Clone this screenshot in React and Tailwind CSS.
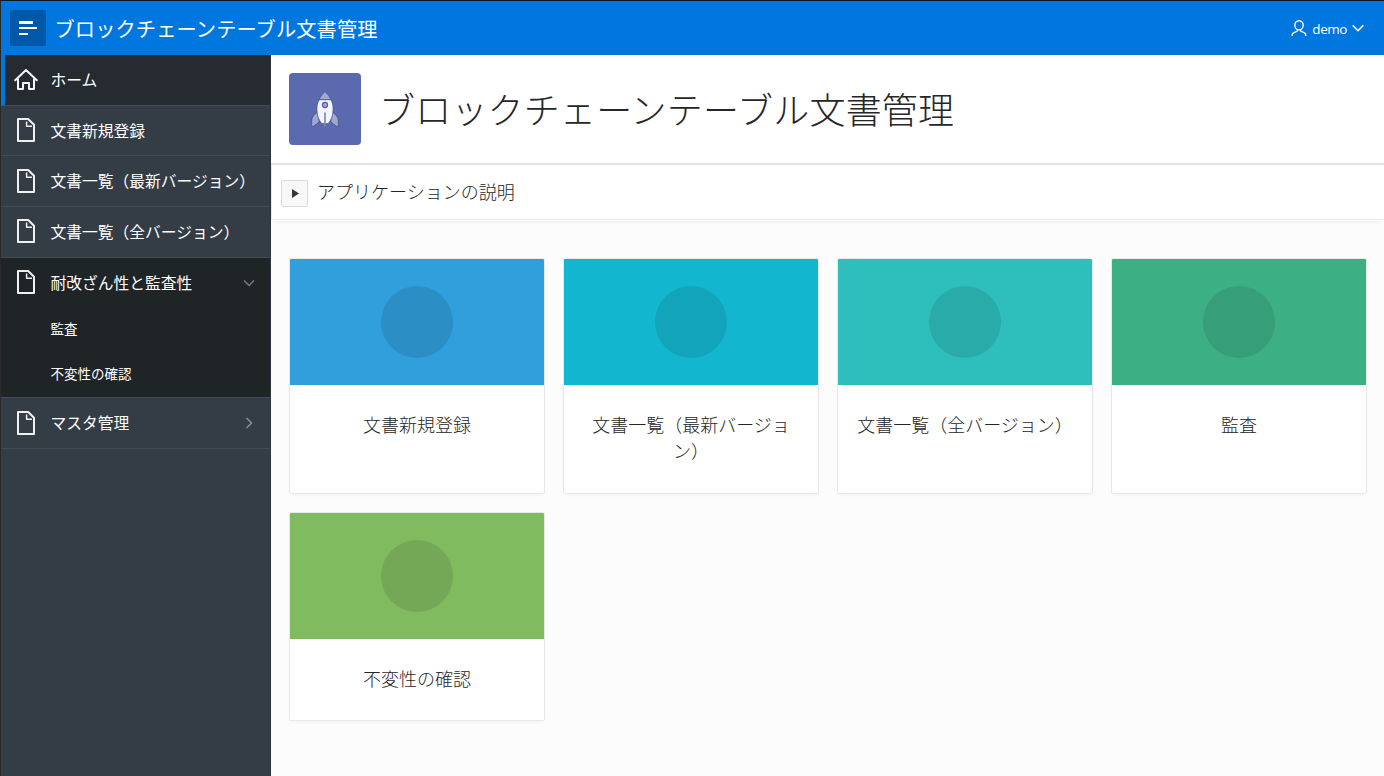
const FONT = 'font-["Open_Sans","Noto_Sans_CJK_JP",sans-serif]';

function HomeIcon() {
  return (
    <svg className="block h-6 w-6 shrink-0" viewBox="0 0 24 24" fill="none" stroke="#f4f5f5" strokeWidth="2" strokeLinejoin="round" strokeLinecap="round">
      <path d="M1.200 12.300 12 2l10.800 10.300M4 11.300V21h5v-6h6v6h5v-9.700" />
    </svg>
  );
}

function FileIcon({ className = "" }) {
  return (
    <svg className={`block h-6 w-6 shrink-0 ${className}`} viewBox="0 0 24 24" fill="none" stroke="#f0f1f1" strokeWidth="2" strokeLinejoin="round">
      <path d="M4 1h10.200L20 6.800V23H4z" />
      <path d="M12.600 3.600v4.700h5.400" strokeWidth="1.500" />
    </svg>
  );
}

function Chevron({ className, d, stroke, width = 1.5 }) {
  return (
    <svg className={className} viewBox="0 0 12 12" fill="none" stroke={stroke} strokeWidth={width}>
      <path d={d} />
    </svg>
  );
}

function Rocket() {
  return (
    <svg className="block h-9 w-7" viewBox="0 0 28 36" stroke="#434f91" strokeWidth="0.8" strokeLinejoin="round">
      <path d="M7 20.500C3 23.500.700 26.500.700 30v5.300h1.800L8.200 31zM21 20.500c4 3 6.300 6 6.300 9.500v5.300h-1.800L19.800 31z" fill="#a1a7d0" />
      <path d="M14 .6c-3 2.700-4.700 5-5.800 8.100h11.600C18.700 5.600 17 3.300 14 .6z" fill="#a1a7d0" />
      <path d="M8.200 8.700C6.300 12 5.900 14 5.900 18.500c0 6.500 2 11 5.100 14.200h6c3.100-3.200 5.100-7.700 5.100-14.200 0-4.500-.4-6.500-2.300-9.800z" fill="#f4f5fb" />
      <circle cx="14" cy="14" r="2.600" fill="#a1a7d0" stroke="#4f5b9f" strokeWidth="1.100" />
      <path d="M14 21.500v14" stroke="#7e86bb" strokeWidth="1.700" />
    </svg>
  );
}

function NavItem({ icon, label, height, active, open, arrow }) {
  const tone = active ? "bg-[#252b31]" : open ? "bg-[#1f2427]" : "";
  return (
    <a className={`flex ${height} items-center ${open ? "" : "border-b border-[#434c54]"} ${tone} ${active ? "border-l-4 border-l-[#0076df] pl-[9px]" : "pl-[13px]"} pr-[15px]`}>
      {icon}
      <span className="ml-[12.500px] flex-1 whitespace-nowrap text-[15.75px] leading-5 text-white">{label}</span>
      {arrow === "down" && <Chevron className="h-3 w-3" d="M1 3.500 6 8.500l5-5" stroke="#777b7d" />}
      {arrow === "right" && <Chevron className="h-3 w-3" d="M3.500 1l5 5-5 5" stroke="#838a90" width={1.700} />}
    </a>
  );
}

function Card({ title, color, circle, height }) {
  return (
    <div className={`${height} overflow-hidden rounded-[2px] border border-[#e9e9e9] bg-white shadow-[0_2px_4px_-2px_rgba(0,0,0,0.08)]`}>
      <div className={`flex h-[126px] items-center justify-center ${color}`}>
        <div className={`h-[72px] w-[72px] rounded-full ${circle}`} />
      </div>
      <div className="px-[18px] pt-[27px] text-center text-[18px] font-light leading-[26px] text-[#262626]">{title}</div>
    </div>
  );
}

export default function App() {
  return (
    <div className={`flex h-[776px] w-[1384px] flex-col overflow-hidden border-l border-t border-l-[#292929] border-t-[#10161d] bg-[#fcfcfc] ${FONT}`}>
      <header className="flex h-[54px] shrink-0 items-center bg-[#0076df] pl-[9px] pr-5 text-white">
        <button className="flex h-9 w-9 items-center justify-center rounded-[2px] bg-[#0059a8]">
          <svg className="h-[18px] w-[18px]" viewBox="0 0 18 18" fill="#fff">
            <path d="M0 2h14v3H0zM0 8h18v2H0zM0 14h9v2H0z" />
          </svg>
        </button>
        <h1 className="ml-[8.500px] flex-1 pt-[2px] text-[20.25px] leading-7 tracking-[0.08px]">ブロックチェーンテーブル文書管理</h1>
        <div className="flex items-center">
          <svg className="h-4 w-4" viewBox="0 0 16 16" fill="none" stroke="#fff" strokeWidth="1.400">
            <ellipse cx="8" cy="5.300" rx="4.200" ry="4.600" />
            <path d="M1.300 16v-1.300c0-1.400 1-2.100 4.500-3.300.8-.3.8-1 .6-1.800M14.700 16v-1.300c0-1.400-1-2.100-4.500-3.300-.8-.3-.8-1-.6-1.800" />
          </svg>
          <span className="ml-[5px] pt-px text-[13.500px] font-medium leading-5 tracking-[-0.45px]">demo</span>
          <Chevron className="ml-[5px] h-3 w-3" d="M.7 3.400 6 8.700l5.300-5.300" stroke="#fff" width={1.600} />
        </div>
      </header>
      <div className="flex min-h-0 flex-1">
        <nav className="flex w-[270px] shrink-0 flex-col border-r border-[#2c333d] bg-[#343d46]">
          <NavItem icon={<HomeIcon />} label="ホーム" height="h-[51px]" active />
          <NavItem icon={<FileIcon className="mb-px" />} label="文書新規登録" height="h-[50px]" />
          <NavItem icon={<FileIcon />} label="文書一覧（最新バージョン）" height="h-[51px]" />
          <NavItem icon={<FileIcon className="mb-[2px]" />} label="文書一覧（全バージョン）" height="h-[51px]" />
          <div className="h-[140px] border-b border-[#434c54] bg-[#1f2427]">
            <NavItem icon={<FileIcon className="mb-px" />} label="耐改ざん性と監査性" height="h-[49px]" open arrow="down" />
            <div className="flex h-[45px] items-center pl-[49.500px] text-[13.500px] text-white">監査</div>
            <div className="flex h-[45px] items-center pl-[49.500px] text-[13.500px] text-white">不変性の確認</div>
          </div>
          <NavItem icon={<FileIcon />} label="マスタ管理" height="h-[51px]" arrow="right" />
        </nav>
        <main className="flex-1">
          <div className="flex h-[110px] items-center border-b-2 border-[#e4e4e4] bg-white pl-[18px]">
            <div className="flex h-[72px] w-[72px] items-center justify-center rounded-[4px] bg-[#5b69ae]">
              <Rocket />
            </div>
            <h2 className="ml-[18px] pt-[4px] text-[36px] font-light leading-[48px] tracking-[0.2px] text-[#262626]">ブロックチェーンテーブル文書管理</h2>
          </div>
          <section className="flex h-[55px] items-center border-b border-l border-[#e9e9e9] bg-white pl-[9px] shadow-[0_1px_0_#fff,0_3px_4px_-2px_rgba(0,0,0,0.1)]">
            <button className="mt-[2px] flex h-[27px] w-[27px] items-center justify-center rounded-[2px] border border-[#dbdbdb] bg-[#f8f8f8]">
              <svg className="ml-px h-[9px] w-[7px]" viewBox="0 0 7 9" fill="#353535">
                <path d="M0 0 7 4.500 0 9z" />
              </svg>
            </button>
            <h3 className="ml-[9px] pb-px text-[18px] font-light leading-7 text-[#262626]">アプリケーションの説明</h3>
          </section>
          <div className="grid grid-cols-4 items-start gap-x-[18px] gap-y-[18px] pl-[18px] pr-[17px] pt-[38px]">
            <Card title="文書新規登録" color="bg-[#309fdb]" circle="bg-[#2b8fc5]" height="h-[236px]" />
            <Card title="文書一覧（最新バージョン）" color="bg-[#13b6cf]" circle="bg-[#11a4ba]" height="h-[236px]" />
            <Card title="文書一覧（全バージョン）" color="bg-[#2ebfbc]" circle="bg-[#29aca9]" height="h-[236px]" />
            <Card title="監査" color="bg-[#3caf85]" circle="bg-[#369e78]" height="h-[236px]" />
            <Card title="不変性の確認" color="bg-[#81bb5f]" circle="bg-[#74a856]" height="h-[209px]" />
          </div>
        </main>
      </div>
    </div>
  );
}
